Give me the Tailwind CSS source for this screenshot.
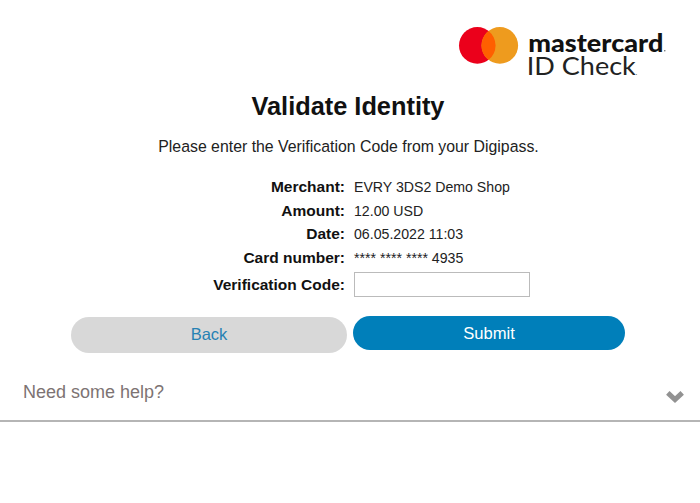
<!DOCTYPE html>
<html lang="en">
<head>
<meta charset="utf-8">
<title>Validate Identity</title>
<script src="https://cdn.jsdelivr.net/npm/@tailwindcss/browser@4"></script>
</head>
<body class="h-[503px] overflow-hidden bg-white font-['Liberation_Sans',Arial,sans-serif] text-[#222]">
<header class="flex h-[88px] justify-end pt-5 pr-5">
  <svg class="h-[64px] w-[230px]" viewBox="450 20 230 64" role="img" aria-label="mastercard ID Check">
    <circle cx="477.3" cy="45.4" r="18.3" fill="#eb001b"/>
    <circle cx="499.8" cy="45.4" r="18.3" fill="#ee9b1e"/>
    <path d="M488.55 31 A18.3 18.3 0 0 1 488.55 59.8 A18.3 18.3 0 0 1 488.55 31Z" fill="#ff5f00"/>
    <g font-family="Lato, sans-serif" fill="#111">
      <text x="528.3" y="51.5" font-size="24.5" font-weight="900" textLength="135" lengthAdjust="spacingAndGlyphs">mastercard</text>
      <text x="526.8" y="75.3" font-size="24.5" textLength="109" lengthAdjust="spacingAndGlyphs" fill="#222">ID Check</text>
    </g>
    <circle cx="664.8" cy="50.8" r=".7" fill="#555"/>
    <circle cx="636.6" cy="74.5" r=".6" fill="#888"/>
  </svg>
</header>
<main>
  <h1 class="h-[46px] pr-1 text-center text-[25.35px] leading-[36px] font-bold text-[#111]">Validate Identity</h1>
  <p class="h-[41px] pr-[3px] pt-px text-center text-[15.85px] leading-[24px]">Please enter the Verification Code from your Digipass.</p>
  <dl class="grid grid-cols-[345px_1fr] grid-rows-[24px_23px_24px_23px_30px] items-center gap-x-[9px] text-[14.15px]">
    <dt class="text-right text-[15.5px] font-bold text-[#111]">Merchant:</dt><dd class="pt-0.5">EVRY 3DS2 Demo Shop</dd>
    <dt class="text-right text-[15.5px] font-bold text-[#111]">Amount:</dt><dd class="pt-0.5">12.00 USD</dd>
    <dt class="text-right text-[15.5px] font-bold text-[#111]">Date:</dt><dd class="pt-0.5">06.05.2022 11:03</dd>
    <dt class="text-right text-[15.5px] font-bold text-[#111]">Card number:</dt><dd class="pt-0.5">**** **** **** 4935</dd>
    <dt class="pt-0.5 text-right text-[15.5px] font-bold text-[#111]"><label for="code">Verification Code:</label></dt>
    <dd><input id="code" class="block h-[25px] w-[176px] border border-[#bbb] bg-white px-1 outline-none"></dd>
  </dl>
  <div class="mt-[17px] flex h-[54px] items-start pl-[71px]">
    <button class="mt-px mr-1.5 h-[36px] w-[276px] rounded-full bg-[#d8d8d8] pb-0.5 text-[16.5px] text-[#2681b3]">Back</button>
    <button class="h-[34px] w-[272px] rounded-full bg-[#007fba] pt-0.5 text-[16.6px] text-white">Submit</button>
  </div>
</main>
<section class="flex h-[52px] items-center justify-between border-b-2 border-[#b5b5b5] pr-[15px] pb-1.5 pl-[23px] text-[#7d7373]">
  <span class="text-[18px]">Need some help?</span>
  <svg class="mt-2.5 h-[14px] w-[20px]" viewBox="0 0 20 14" fill="none" stroke="#929292" stroke-width="5"><path d="M2.8 2.8 10 9.5 17.2 2.8"/></svg>
</section>
</body>
</html>
